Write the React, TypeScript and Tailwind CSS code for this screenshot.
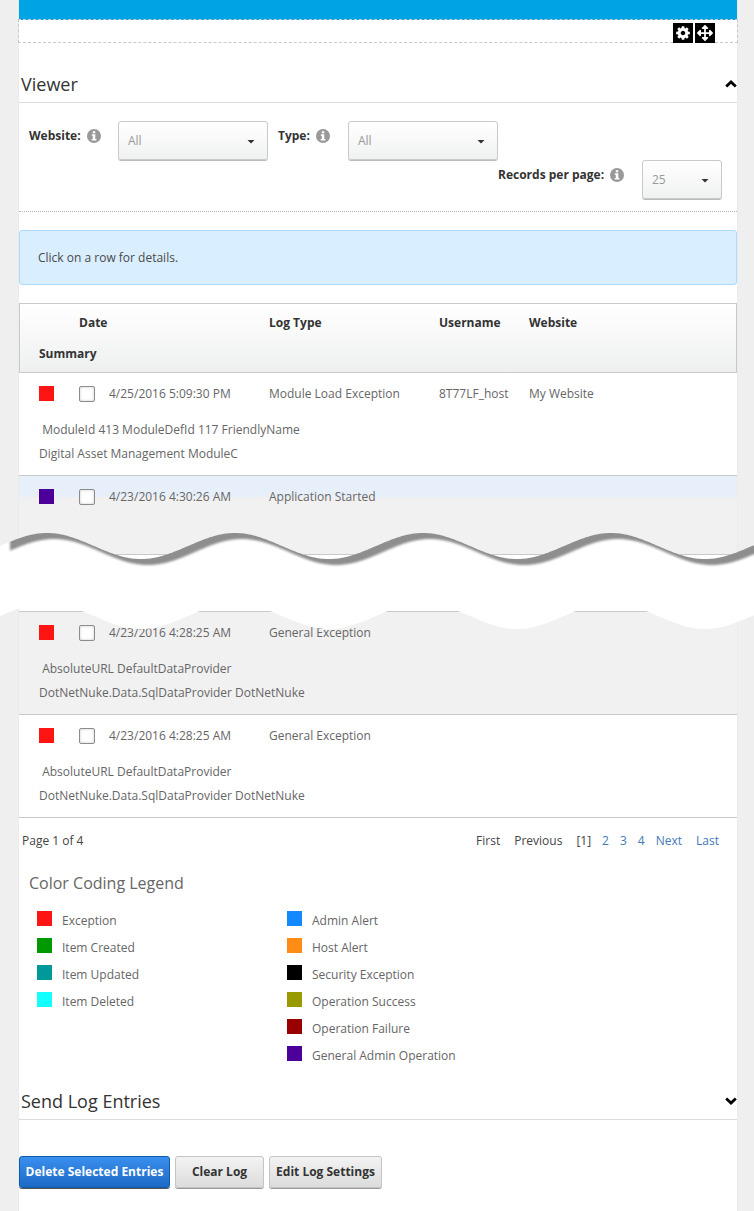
import type { ReactNode } from 'react';
import { FaArrowsAlt } from 'react-icons/fa';

const COG_PATH =
  'M1152 896q0-106-75-181t-181-75-181 75-75 181 75 181 181 75 181-75 75-181zm512-109v222q0 12-8 23t-20 13l-185 28q-19 54-39 91 35 50 107 138 10 12 10 25t-9 23q-27 37-99 108t-94 71q-12 0-26-9l-138-108q-44 23-91 38-16 136-29 186-7 28-36 28h-222q-14 0-24.5-8.5t-11.5-21.5l-28-184q-49-16-90-37l-141 107q-10 9-25 9-14 0-25-11-126-114-165-168-7-10-7-23 0-12 8-23 15-21 51-66.5t54-70.5q-27-50-41-99l-183-27q-13-2-21-12.5t-8-23.5v-222q0-12 8-23t19-13l186-28q14-46 39-92-40-57-107-138-10-12-10-24 0-10 9-23 26-36 98.5-107.5t94.5-71.5q13 0 26 10l138 107q44-23 91-38 16-136 29-186 7-28 36-28h222q14 0 24.5 8.5t11.5 21.5l28 184q49 16 90 37l142-107q9-9 24-9 13 0 25 10 129 119 165 170 7 8 7 22 0 12-8 23-15 21-51 66.5t-54 70.5q26 50 41 98l183 28q13 2 21 12.5t8 23.5z';

type Entry = {
  color: string;
  date: string;
  type: string;
  user?: string;
  site?: string;
  summary: string[];
  row: string;
};

const recent: Entry[] = [
  {
    color: 'bg-[#ff1414]',
    date: '4/25/2016 5:09:30 PM',
    type: 'Module Load Exception',
    user: '8T77LF_host',
    site: 'My Website',
    summary: ['ModuleId 413 ModuleDefId 117 FriendlyName', 'Digital Asset Management ModuleC'],
    row: 'bg-white',
  },
  {
    color: 'bg-[#4c0099]',
    date: '4/23/2016 4:30:26 AM',
    type: 'Application Started',
    summary: [''],
    row: 'bg-[linear-gradient(#e7f0fa_21px,#f1f1f1_21px)]',
  },
];

const older: Entry[] = [
  {
    color: 'bg-[#ff1414]',
    date: '4/23/2016 4:28:25 AM',
    type: 'General Exception',
    summary: ['AbsoluteURL DefaultDataProvider', 'DotNetNuke.Data.SqlDataProvider DotNetNuke'],
    row: 'bg-[#f1f1f1]',
  },
  {
    color: 'bg-[#ff1414]',
    date: '4/23/2016 4:28:25 AM',
    type: 'General Exception',
    summary: ['AbsoluteURL DefaultDataProvider', 'DotNetNuke.Data.SqlDataProvider DotNetNuke'],
    row: 'bg-white',
  },
];

const legend = [
  [
    { color: 'bg-[#ff1414]', label: 'Exception' },
    { color: 'bg-[#009900]', label: 'Item Created' },
    { color: 'bg-[#009999]', label: 'Item Updated' },
    { color: 'bg-[#14ffff]', label: 'Item Deleted' },
  ],
  [
    { color: 'bg-[#1489ff]', label: 'Admin Alert' },
    { color: 'bg-[#ff8c14]', label: 'Host Alert' },
    { color: 'bg-black', label: 'Security Exception' },
    { color: 'bg-[#999900]', label: 'Operation Success' },
    { color: 'bg-[#990000]', label: 'Operation Failure' },
    { color: 'bg-[#4c0099]', label: 'General Admin Operation' },
  ],
];

function Chevron({ up }: { up?: boolean }) {
  return (
    <svg viewBox="0 0 12 8" className="h-2 w-3 shrink-0" fill="none" stroke="#000" strokeWidth="2.8" aria-hidden="true">
      <path d={up ? 'M1.2 6.6 6 2l4.8 4.6' : 'M1.2 1.4 6 6l4.8-4.6'} />
    </svg>
  );
}

function InfoIcon() {
  return (
    <svg viewBox="0 0 14 14" className="size-3.5 shrink-0" aria-hidden="true">
      <circle cx="7" cy="7" r="7" fill="#999" />
      <path d="M5.8 2.2h2.5v2H5.8zM4.8 5.2h3.5v4.7h1.1v1.6H4.7V9.9h1.1V6.8h-1z" fill="#fff" />
    </svg>
  );
}

function SectionHeading({ title, open }: { title: string; open?: boolean }) {
  return (
    <h2 className="border-b border-[#dcdcdc] pb-1.5 text-[18px] leading-6 text-[#333]">
      <button type="button" aria-expanded={!!open} className="flex w-full items-center justify-between pl-0.5 text-left">
        {title}
        <Chevron up={open} />
      </button>
    </h2>
  );
}

function Filter(props: { id: string; label: string; value: string; labelWidth: string; width: string; className?: string }) {
  return (
    <div className={`flex h-[39px] items-start ${props.className ?? ''}`}>
      <div className={`flex items-center gap-1.5 leading-[30px] ${props.labelWidth}`}>
        <label htmlFor={props.id} className="font-bold whitespace-nowrap text-[#333]">
          {props.label}
        </label>
        <InfoIcon />
      </div>
      <div className={`relative ${props.width}`}>
        <select
          id={props.id}
          className="h-[39px] w-full appearance-none rounded-[3px] border border-[#c9c9c9] bg-linear-to-b from-white to-[#f0f2f1] pl-[9px] text-[#999] shadow-[0_1px_0_#bbb]"
        >
          <option>{props.value}</option>
        </select>
        <svg viewBox="0 0 8 4" className="pointer-events-none absolute top-[19px] right-[13px] h-1 w-2" aria-hidden="true">
          <path d="M0.5 0h7L4 3.6z" fill="#333" />
        </svg>
      </div>
    </div>
  );
}

function Columns() {
  return (
    <colgroup>
      <col className="w-[60px]" />
      <col className="w-[190px]" />
      <col className="w-[170px]" />
      <col className="w-[90px]" />
      <col />
    </colgroup>
  );
}

function EntryRows({ entry }: { entry: Entry }) {
  return (
    <tbody className={entry.row}>
      <tr className="h-[42px]">
        <td className="pb-0.5 pl-5">
          <span className={`block size-[15px] ${entry.color}`} />
        </td>
        <td>
          <label className="flex items-center gap-[14px]">
            <input
              type="checkbox"
              className="size-4 appearance-none rounded-[2px] border border-[#8c8c8c] bg-white shadow-[inset_0_0_3px_#ccc] checked:bg-[#1f78d8]"
            />
            {entry.date}
          </label>
        </td>
        <td>{entry.type}</td>
        <td>{entry.user}</td>
        <td>{entry.site}</td>
      </tr>
      <tr>
        <td colSpan={5} className="border-b border-[#c9c9c9] pt-[3px] pb-[9px] pl-5 leading-6">
          {entry.summary.map((line, i) => (
            <div key={i}>
              {i === 0 && '\u00a0'}
              {line}
            </div>
          ))}
        </td>
      </tr>
    </tbody>
  );
}

const PERIOD = 188;

function wave(mid: number, dx = 0, from = 0) {
  const points: string[] = [];
  for (let x = from; x <= 764; x += 2) {
    const y = mid - 13 * Math.cos((2 * Math.PI * (x - dx - 47)) / PERIOD);
    points.push(`${x} ${y.toFixed(2)}`);
  }
  return points;
}

function Tear() {
  const top = wave(16);
  const bottom = wave(86);
  const edge = wave(10, 0, 10);
  const shade = wave(22, 7, 10).reverse();
  return (
    <div className="relative h-14">
      <svg
        viewBox="0 0 754 104"
        preserveAspectRatio="none"
        className="pointer-events-none absolute -top-[25px] -left-[19px] h-[104px] w-[calc(100%+36px)]"
        aria-hidden="true"
      >
        <defs>
          <filter id="soft" x="-2%" y="-20%" width="104%" height="140%">
            <feGaussianBlur stdDeviation="1" />
          </filter>
          <clipPath id="below">
            <path d={`M${top.join('L')}V104H0Z`} />
          </clipPath>
        </defs>
        <path d={`M${top.join('L')}L${[...bottom].reverse().join('L')}Z`} fill="#fff" />
        <g clipPath="url(#below)">
          <path d={`M${edge.join('L')}L${shade.join('L')}Z`} fill="#8e8e8e" filter="url(#soft)" />
        </g>
      </svg>
    </div>
  );
}

function PageLink({ children }: { children: ReactNode }) {
  return (
    <a href="#log" className="text-[#4379b8]">
      {children}
    </a>
  );
}

const greyButton =
  'h-8 rounded-[3px] border border-[#c4c4c4] bg-linear-to-b from-[#f3f3f3] to-[#dcdcdc] font-bold text-[#333] shadow-[0_1px_0_#999]';

export default function App() {
  return (
    <div className="min-h-screen overflow-x-hidden bg-[#efefef] pr-[17px] pl-[19px] font-['Open_Sans',sans-serif] text-[12px] text-[#666]">
      <main className="min-h-screen bg-white pb-5 shadow-[0_0_1px_#ddd]">
        <div className="h-5 bg-[#00a4e4]" />
        <div className="relative -mx-px -mt-px flex h-6 justify-end gap-0.5 border border-dashed border-[#c9c9c9] pt-[3px] pr-[22px]">
          <button type="button" aria-label="Settings" className="flex size-5 items-center justify-center bg-black text-white">
            <svg viewBox="0 0 1792 1792" className="size-4" fill="currentColor" aria-hidden="true">
              <path d={COG_PATH} />
            </svg>
          </button>
          <button type="button" aria-label="Move" className="flex size-5 items-center justify-center bg-black text-white">
            <FaArrowsAlt size={16} />
          </button>
        </div>

        <div className="pt-[29px]">
          <SectionHeading title="Viewer" open />
        </div>

        <div className="flex flex-wrap gap-x-2.5 border-b border-dotted border-[#b5b5b5] pt-[18px] pr-[15px] pb-3 pl-2.5">
          <Filter id="site" label="Website:" value="All" labelWidth="w-[89px]" width="w-[150px]" />
          <Filter id="type" label="Type:" value="All" labelWidth="w-[70px]" width="w-[150px]" />
          <Filter id="count" label="Records per page:" value="25" labelWidth="w-[144px]" width="w-20" className="ml-auto" />
        </div>

        <p className="mt-[18px] rounded-[3px] border border-[#addbff] bg-[#d9eeff] pl-[18px] leading-[53px] text-[#4a4a4a]">
          Click on a row for details.
        </p>

        <table className="mt-[18px] w-full table-fixed border-separate border-spacing-0">
          <Columns />
          <thead className="bg-linear-to-b from-white to-[#eef0ef] text-left text-[#333]">
            <tr className="h-[39px]">
              <td className="border-t border-l border-[#c9c9c9]" />
              <th className="border-t border-[#c9c9c9]">Date</th>
              <th className="border-t border-[#c9c9c9]">Log Type</th>
              <th className="border-t border-[#c9c9c9]">Username</th>
              <th className="border-t border-r border-[#c9c9c9]">Website</th>
            </tr>
            <tr className="h-[31px]">
              <th colSpan={5} className="border-x border-b border-[#c9c9c9] pb-[7px] pl-[19px]">
                Summary
              </th>
            </tr>
          </thead>
          {recent.map((entry, i) => (
            <EntryRows key={i} entry={entry} />
          ))}
        </table>

        <Tear />

        <table className="w-full table-fixed border-separate border-spacing-0 border-t border-[#c9c9c9]">
          <Columns />
          {older.map((entry, i) => (
            <EntryRows key={i} entry={entry} />
          ))}
        </table>

        <div className="flex justify-between pt-[11px] pr-[18px] pl-[3px] leading-6 text-[#444]">
          <span>Page 1 of 4</span>
          <nav aria-label="Pages" className="flex gap-3.5">
            <span>First</span>
            <span>Previous</span>
            <span className="flex gap-[11px]">
              <span>[1]</span>
              <PageLink>2</PageLink>
              <PageLink>3</PageLink>
              <PageLink>4</PageLink>
              <PageLink>Next</PageLink>
            </span>
            <PageLink>Last</PageLink>
          </nav>
        </div>

        <section className="mt-[18px] pl-2.5">
          <h3 className="text-[16px] leading-6">Color Coding Legend</h3>
          <div className="mt-[13px] flex pl-2">
            {legend.map((column, i) => (
              <ul key={i} className="w-[250px]">
                {column.map((item) => (
                  <li key={item.label} className="flex h-[27px] items-start gap-2.5 leading-[25px]">
                    <span className={`mt-[3px] size-[15px] ${item.color}`} />
                    {item.label}
                  </li>
                ))}
              </ul>
            ))}
          </div>
        </section>

        <div className="pt-[19px]">
          <SectionHeading title="Send Log Entries" />
        </div>

        <div className="mt-9 flex gap-[5px]">
          <button
            type="button"
            className="h-8 w-[151px] rounded-[3px] border border-[#0f5ba8] bg-linear-to-b from-[#3a8fee] to-[#1d6ac6] font-bold whitespace-nowrap text-white shadow-[0_1px_0_#555]"
          >
            Delete Selected Entries
          </button>
          <button type="button" className={`w-[89px] ${greyButton}`}>
            Clear Log
          </button>
          <button type="button" className={`w-[113px] ${greyButton}`}>
            Edit Log Settings
          </button>
        </div>
      </main>
    </div>
  );
}
